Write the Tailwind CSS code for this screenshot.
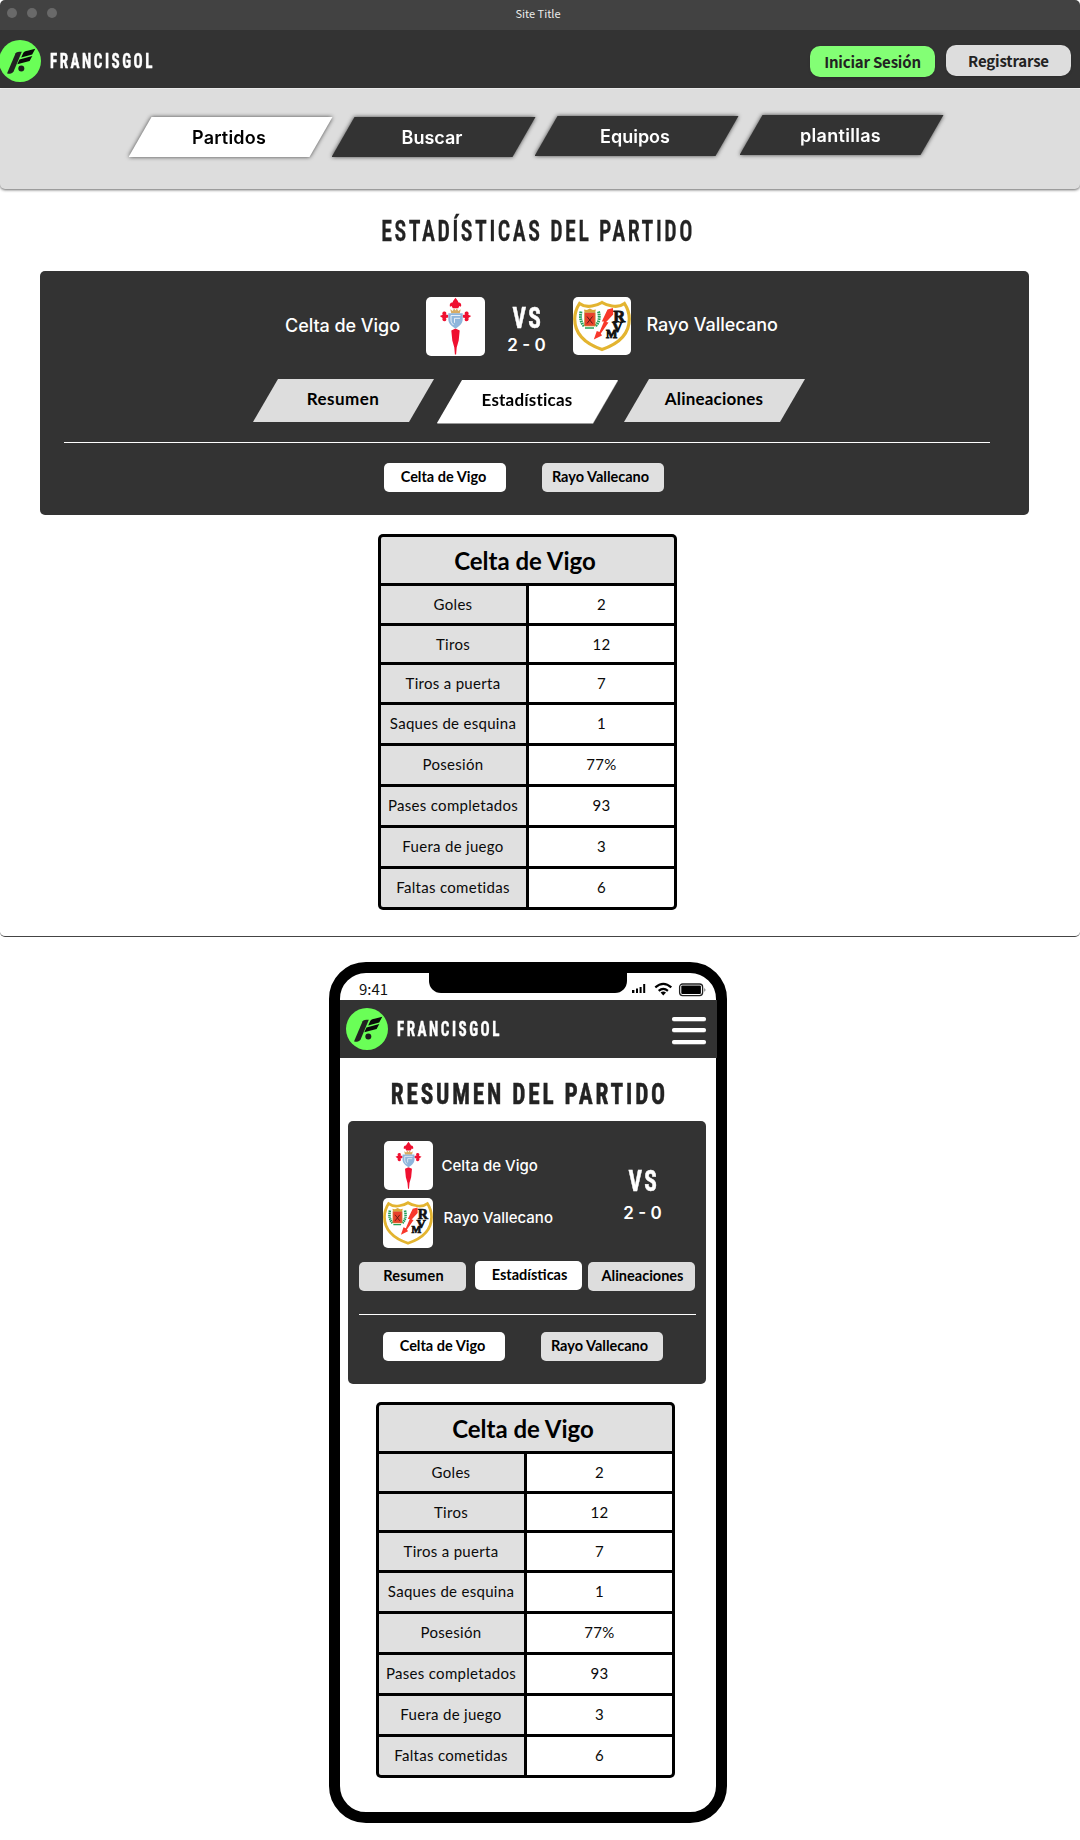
<!DOCTYPE html>
<html lang="es">
<head>
<meta charset="utf-8">
<title>FrancisGol</title>
<script src="https://cdn.jsdelivr.net/npm/@tailwindcss/browser@4"></script>
</head>
<body class="w-[1080px] h-[1840px] overflow-hidden bg-white">

<svg class="hidden">
  <symbol id="logo" viewBox="0 0 42 42">
    <circle cx="21" cy="21" r="21" fill="#6aff57"/>
    <path d="M22.8 11.8C19.5 11.8 17.3 12 16.6 13.2L8 33.6c3 .3 5.600-.4 6.600-2.200z" fill="#222"/>
    <path d="M36.300 8.700L33.200 14.600 22.200 17.500 24 13.500C24.800 11.800 26.500 11.200 28.500 10.800z" fill="#0a0a0a"/>
    <path d="M33.300 15.900L30.600 20.900 18.300 24.300 20.500 19.400z" fill="#0a0a0a"/>
    <circle cx="22.300" cy="28.400" r="3" fill="#1d1d1d"/>
  </symbol>
  <symbol id="celta" viewBox="0 0 59 59">
    <g fill="#ef1030">
      <path d="M29.500 .8l2.200 3 .8 1.700c2-.2 3.400 1.800 2.500 4.200l-1.600-.6-1.200 2.200h-5.400l-1.200-2.200-1.600.6c-.9-2.400.5-4.400 2.500-4.200l.8-1.700z"/>
      <path d="M25.300 33.500l4.200-2 4.200 2-1 10-2 7-.6 7h-1.200l-.6-7-2-7z"/>
      <path id="fleur" d="M13.800 19l3-1.300c-1.200-1.700.2-3.500 2-3.300 1.600.2 2 2 1 3l2.500.7v2.400l-2.500.5c1.200 1.300.5 3.200-1.200 3.300-1.800 0-2.800-1.600-2-3.200z"/>
      <use href="#fleur" transform="matrix(-1 0 0 1 59 0)"/>
    </g>
    <path d="M25.300 16.500l-1-4.300 2.400 1.700 1.400-2.400 1.400 2 1.400-2 1.400 2.400 2.400-1.700-1 4.300z" fill="#d9ac63"/>
    <path d="M22.300 16.300h14.400v6c0 4.500-3.500 7-7.200 9.400-3.700-2.400-7.200-4.900-7.200-9.400z" fill="#8fb6dc"/>
    <path d="M34.500 18.500H25v4.500c0 2 1 3.500 2.500 5M34 21.300h-5.500v4.500" fill="none" stroke="#fff" stroke-width=".8"/>
  </symbol>
  <symbol id="rayo" viewBox="0 0 58 58">
    <path d="M6.500 6.500Q12 10.500 19 9 25 8 29 5.500 33 8 39 9 46 10.500 51.500 6.500 56.300 14 56.300 22C56.300 38 45 47 29 52.500 13 47 1.700 38 1.700 22Q1.700 14 6.500 6.500Z" fill="#fff" stroke="#e3b430" stroke-width="3.200"/>
    <g fill="none" stroke="#23a05a" stroke-width="3" stroke-dasharray="1.600 .7">
      <path d="M8 14.500Q6 24 11.500 29.500"/><path d="M25.500 14.500Q28 24 22 29.500"/>
    </g>
    <path d="M12 31h9" stroke="#23a05a" stroke-width="1.500"/>
    <path d="M11.500 15.500h10.700v13.500h-10.700z" fill="#e8412c" stroke="#c79a3a" stroke-width=".7"/>
    <path d="M11.500 15l-.6-2.500 3 .6 3-1.600 3 1.600 3-.6-.6 2.500z" fill="#d9a93a"/>
    <path d="M14 19.500l5.500 7M19.500 19.500l-5.500 7" stroke="#5a1a14" stroke-width="1"/>
    <path d="M40 11L34.500 12.500 28.800 24.500 31 24.500 26.500 35 23.800 34 20.800 42.500 29 38.500 27.800 36.500 35.500 25.500 33.200 25 40.200 17.500z" fill="#f8382b"/>
    <g fill="#111" font-family="Liberation Serif, serif" font-weight="700" stroke="#111" stroke-width=".8">
      <text x="40.300" y="24.500" font-size="16.500">R</text>
      <text x="39" y="34.500" font-size="15">V</text>
      <text x="33" y="40.500" font-size="12">M</text>
    </g>
  </symbol>
</svg>

<!-- Desktop window -->
<section class="h-[937px] rounded-[5px] border-b border-[#444] overflow-hidden bg-white">
  <div class="relative flex h-[30px] items-center justify-center bg-[#424242] pb-[3px] pr-1 font-['Noto_Sans_CJK_SC',sans-serif] text-[11px] leading-none text-[#ececec]">
    <div class="absolute left-[7.400px] top-2 flex gap-[10px]">
      <i class="size-[10px] rounded-full bg-[#696969]"></i>
      <i class="size-[10px] rounded-full bg-[#696969]"></i>
      <i class="size-[10px] rounded-full bg-[#696969]"></i>
    </div>
    <span>Site Title</span>
  </div>

  <header class="flex h-[59px] items-start border-b border-white bg-[#333]">
    <svg class="-ml-px mt-[10px] size-[42px]"><use href="#logo"/></svg>
    <div class="ml-[9px] mt-[11px] w-[110px] whitespace-nowrap font-['Roboto_Condensed',sans-serif] text-[19.400px] font-bold leading-[42px] text-white [-webkit-text-stroke:.4px_#fff]"><span class="inline-block origin-left scale-x-[.78] tracking-[3.200px]">FRANCISGOL</span></div>
    <nav class="ml-auto mr-[9px] flex gap-[11px] font-['Noto_Sans_CJK_SC',sans-serif] text-[15px] font-bold leading-none tracking-[-.2px] text-[#222]">
      <a class="mt-4 flex h-[31px] w-[125px] items-center justify-center rounded-[10px] bg-[#83ff75] pb-px shadow-sm">Iniciar Sesión</a>
      <a class="mt-[15px] flex h-[31px] w-[125px] items-center justify-center rounded-[10px] bg-[#ddd] pb-px shadow-sm">Registrarse</a>
    </nav>
  </header>

  <nav class="relative flex h-[100px] items-start rounded-b-[5px] bg-[#ddd] pl-[128.500px] pt-[26px] font-['Inter',sans-serif] text-[18px] font-semibold leading-none text-white shadow-[0_1px_3px_rgba(0,0,0,.6)]">
    <div class="mt-[2px] drop-shadow-[0_0_2px_rgba(0,0,0,.7)]"><a class="flex h-10 w-[204px] items-center justify-center bg-white pr-[3px] pt-[2px] tracking-[.2px] text-black [clip-path:polygon(23px_0,100%_0,calc(100%-23px)_100%,0_100%)]">Partidos</a></div>
    <div class="-ml-px mt-[2px] drop-shadow-[0_0_2px_rgba(0,0,0,.7)]"><a class="flex h-10 w-[204px] items-center justify-center bg-[#333] pr-[3px] pt-[2px] [clip-path:polygon(23px_0,100%_0,calc(100%-23px)_100%,0_100%)]">Buscar</a></div>
    <div class="-ml-px mt-px drop-shadow-[0_0_2px_rgba(0,0,0,.7)]"><a class="flex h-10 w-[204px] items-center justify-center bg-[#333] pr-[3px] pt-[2px] [clip-path:polygon(23px_0,100%_0,calc(100%-23px)_100%,0_100%)]">Equipos</a></div>
    <div class="ml-px drop-shadow-[0_0_2px_rgba(0,0,0,.7)]"><a class="flex h-10 w-[204px] items-center justify-center bg-[#333] pr-[2px] pt-[2px] tracking-[.3px] [clip-path:polygon(23px_0,100%_0,calc(100%-23px)_100%,0_100%)]">plantillas</a></div>
  </nav>

  <h1 class="flex h-[82px] items-center justify-center whitespace-nowrap pr-[4px] pt-[4px] font-['Roboto_Condensed',sans-serif] text-[29.200px] font-semibold leading-none text-[#232323] [-webkit-text-stroke:.3px_#232323]"><span class="inline-block scale-x-[.75] tracking-[3.400px]">ESTADÍSTICAS DEL PARTIDO</span></h1>

  <main class="ml-10 h-[244px] w-[989px] rounded-[5px] bg-[#333] pt-[26px]">
    <div class="flex h-[59px] items-start pl-[245px] font-['Inter',sans-serif] text-[18px] font-[550] text-white">
      <span class="w-[141px] whitespace-nowrap leading-[57px] tracking-[-.05px]">Celta de Vigo</span>
      <svg class="size-[59px] rounded-[5px] bg-white"><use href="#celta"/></svg>
      <div class="mr-[5px] flex w-[83px] flex-col items-center pt-[6px]">
        <span class="scale-x-[.8] pl-1 font-['Roboto_Condensed',sans-serif] text-[29.200px] font-bold leading-[30px] tracking-[3px] [-webkit-text-stroke:.5px_#fff]">VS</span>
        <span class="whitespace-nowrap text-[17px] font-semibold leading-6">2 - 0</span>
      </div>
      <svg class="size-[58px] rounded-[5px] bg-white"><use href="#rayo"/></svg>
      <span class="ml-[15.500px] whitespace-nowrap leading-[55px]">Rayo Vallecano</span>
    </div>
    <div class="mt-[23px] flex h-11 items-start pl-[213px] font-['Lato',sans-serif] text-[17px] font-bold leading-none tracking-[.2px] text-black">
      <a class="flex h-[43px] w-[181px] items-center justify-center bg-[#ddd] pb-1 pr-px tracking-[.45px] [clip-path:polygon(25px_0,100%_0,calc(100%-25px)_100%,0_100%)]">Resumen</a>
      <div class="ml-[3px] mt-px drop-shadow-[0_1px_0_#999]"><a class="flex h-[43px] w-[181px] items-center justify-center bg-white pb-1 pr-px [clip-path:polygon(25px_0,100%_0,calc(100%-25px)_100%,0_100%)]">Estadísticas</a></div>
      <a class="ml-[6px] flex h-[43px] w-[181px] items-center justify-center bg-[#ddd] pb-1 pr-px [clip-path:polygon(25px_0,100%_0,calc(100%-25px)_100%,0_100%)]">Alineaciones</a>
    </div>
    <div class="ml-6 mt-[19px] h-px w-[926px] bg-white"></div>
    <div class="mt-5 flex gap-9 pl-[344px] font-['Lato',sans-serif] text-[14.500px] font-bold leading-none text-black">
      <a class="flex h-[29px] w-[122px] items-center justify-center rounded-[5px] bg-white pr-[3px]">Celta de Vigo</a>
      <a class="flex h-[29px] w-[122px] items-center justify-center rounded-[5px] bg-[#e0e0e0] pr-[5px]">Rayo Vallecano</a>
    </div>
  </main>

  <div class="ml-[378px] mt-[19px]" data-stats></div>
</section>

<!-- Phone -->
<section class="ml-[329px] mt-[25px] h-[861px] w-[398px] rounded-[37px] border-[11px] border-black bg-white">
  <div class="flex h-[27px] items-start">
    <span class="w-[89px] pl-[19px] pt-[2px] font-['Noto_Sans_CJK_SC',sans-serif] text-[15px] leading-[27px] text-[#111]">9:41</span>
    <span class="h-5 w-[198px] rounded-b-[12px] bg-black"></span>
    <svg class="ml-[4px] mt-[9px] h-[15px] w-[78px]" viewBox="0 0 78 15">
      <path d="M1 8h2.400v3H1zM5 6.500h2v4.500H5zM8.600 5h2v6h-2zM12.200 2h2v9h-2z" fill="#000"/>
      <g fill="none" stroke="#000" stroke-width="2.200"><path d="M24.300 5.300Q32.300-1.700 40.300 5.300"/><path d="M27.700 8.900Q32.300 4.900 36.900 8.900"/></g>
      <path d="M29.600 10.500q2.700-1.800 5.400 0L32.300 13.400z" fill="#000"/>
      <rect x="48.600" y="2" width="23" height="11.600" rx="3" fill="none" stroke="#222" stroke-width="1.300"/>
      <rect x="50.300" y="3.600" width="19.600" height="8.400" rx="1" fill="#000"/>
      <path d="M73.500 5.700q1.700 2 0 4.200z" fill="#333"/>
    </svg>
  </div>
  <header class="relative flex h-[58px] w-[377px] items-center bg-[#333] pl-[6px]">
    <svg class="size-[42px]"><use href="#logo"/></svg>
    <div class="ml-[9px] mt-[2px] w-[110px] whitespace-nowrap font-['Roboto_Condensed',sans-serif] text-[19.400px] font-bold leading-[42px] text-white [-webkit-text-stroke:.4px_#fff]"><span class="inline-block origin-left scale-x-[.78] tracking-[3.200px]">FRANCISGOL</span></div>
    <div class="ml-auto mr-[11px] mt-[2px] flex w-[34px] flex-col gap-[7.500px]">
      <i class="h-1 rounded-full bg-white shadow-[0_.5px_0_#aaa]"></i>
      <i class="h-1 rounded-full bg-white shadow-[0_.5px_0_#aaa]"></i>
      <i class="h-1 rounded-full bg-white shadow-[0_.5px_0_#aaa]"></i>
    </div>
  </header>
  <h2 class="flex h-[63px] items-center justify-center whitespace-nowrap pl-[3px] pt-[11px] font-['Roboto_Condensed',sans-serif] text-[29.200px] font-bold leading-none text-[#232323] [-webkit-text-stroke:.5px_#232323]"><span class="inline-block scale-x-[.8] tracking-[3.500px]">RESUMEN DEL PARTIDO</span></h2>

  <main class="ml-2 h-[263px] w-[358px] rounded-[5px] bg-[#333] pt-5">
    <div class="flex h-[107px] items-start pl-[35px] font-['Inter',sans-serif] text-[15px] font-[550] leading-none text-white">
      <div class="flex w-[213px] flex-col gap-2 whitespace-nowrap">
        <div class="flex items-center pl-px"><svg class="size-[49px] rounded-[5px] bg-white"><use href="#celta"/></svg><span class="ml-[8.500px]">Celta de Vigo</span></div>
        <div class="flex items-center"><svg class="size-[50px] rounded-[5px] bg-white"><use href="#rayo"/></svg><span class="mb-[12px] ml-[10.500px]">Rayo Vallecano</span></div>
      </div>
      <div class="ml-[5px] flex w-[83px] flex-col items-center pt-[25px]">
        <span class="scale-x-[.8] pl-1 font-['Roboto_Condensed',sans-serif] text-[29.200px] font-bold leading-[30px] tracking-[3px] [-webkit-text-stroke:.5px_#fff]">VS</span>
        <span class="mt-[5px] whitespace-nowrap text-[17px] font-semibold leading-6">2 - 0</span>
      </div>
    </div>
    <div class="mt-[13px] flex items-start pl-[11px] font-['Lato',sans-serif] text-[14.500px] font-bold leading-none text-black">
      <a class="mt-px flex h-[29px] w-[107px] items-center justify-center rounded-[5px] bg-[#ddd] pl-[2px] tracking-[.2px]">Resumen</a>
      <a class="ml-[9px] flex h-[29px] w-[107px] items-center justify-center rounded-[5px] bg-white pl-[2px]">Estadísticas</a>
      <a class="ml-[6px] mt-px flex h-[29px] w-[107px] items-center justify-center rounded-[5px] bg-[#ddd] pl-[2px]">Alineaciones</a>
    </div>
    <div class="ml-[11px] mt-[23px] h-px w-[337px] bg-white"></div>
    <div class="mt-[17px] flex gap-9 pl-[35px] font-['Lato',sans-serif] text-[14.500px] font-bold leading-none text-black">
      <a class="flex h-[29px] w-[122px] items-center justify-center rounded-[5px] bg-white pr-[3px]">Celta de Vigo</a>
      <a class="flex h-[29px] w-[122px] items-center justify-center rounded-[5px] bg-[#e0e0e0] pr-[5px]">Rayo Vallecano</a>
    </div>
  </main>

  <div class="ml-9 mt-[18px]" data-stats></div>
</section>

<script>
const stats = [
  ['Goles', '2', 37], ['Tiros', '12', 36], ['Tiros a puerta', '7', 37], ['Saques de esquina', '1', 38],
  ['Posesión', '77%', 38], ['Pases completados', '93', 38], ['Fuera de juego', '3', 38], ['Faltas cometidas', '6', 38],
];
const rows = stats.map(([label, value, h]) => `
  <div class="flex items-center justify-center whitespace-nowrap bg-[#e0e0e0] pr-px ${h > 37 ? 'pb-[2px]' : ''}" style="height:${h}px">${label}</div>
  <div class="flex items-center justify-center bg-white ${h > 37 ? 'pb-[2px]' : ''}" style="height:${h}px">${value}</div>`).join('');
document.querySelectorAll('[data-stats]').forEach(el => {
  el.innerHTML = `<div class="w-[299px] rounded-[5px] bg-black p-[3px] font-['Lato',sans-serif] text-[15px] leading-none tracking-[.3px] text-[#0a0a0a]">
    <div class="grid grid-cols-2 gap-[3px] overflow-hidden rounded-[2px]">
      <div class="col-span-2 flex h-[46px] items-center justify-center bg-[#e0e0e0] pr-[5px] pt-[2px] text-2xl font-bold leading-none tracking-normal text-black">Celta de Vigo</div>${rows}
    </div></div>`;
});
</script>
</body>
</html>
